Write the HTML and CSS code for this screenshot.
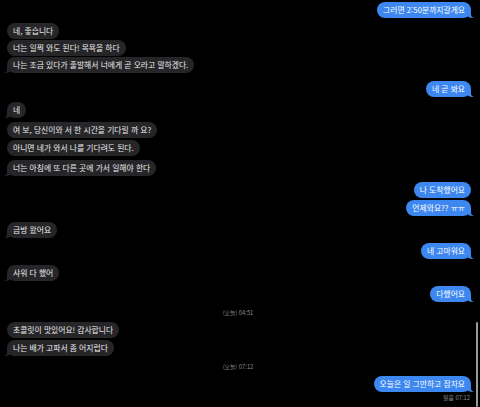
FILE: index.html
```html
<!DOCTYPE html>
<html lang="ko">
<head>
<meta charset="utf-8">
<title>메시지</title>
<link rel="stylesheet" href="styles.css">
</head>
<body>
<div class="screen">
  <div class="thread">
    <div class="msg out tail">그러면 2:50분까지갈게요</div>
    <div class="msg in m5">네, 좋습니다</div>
    <div class="msg in m1">너는 일찍 와도 된다! 목욕을 하다</div>
    <div class="msg in m1 tail">나는 조금 있다가 출발해서 너에게 곧 오라고 말하겠다.</div>
    <div class="msg out m8 tail">네 곧 봐요</div>
    <div class="msg in m5 tail">네</div>
    <div class="msg in m4">여 보, 당신이와 서 한 시간을 기다릴 까 요?</div>
    <div class="msg in m2">아니면 네가 와서 나를 기다려도 된다.</div>
    <div class="msg in m4 tail">너는 아침에 또 다른 곳에 가서 일해야 한다</div>
    <div class="msg out m6">나 도착했어요</div>
    <div class="msg out m2 tail">언제와요?? ㅠㅠ</div>
    <div class="msg in m6 tail">금방 왔어요</div>
    <div class="msg out m5 tail">네 고마워요</div>
    <div class="msg in m6 tail">샤워 다 했어</div>
    <div class="msg out m5 tail">다했어요</div>
    <div class="stamp">(오늘) 04:51</div>
    <div class="msg in m5">초콜릿이 맛있어요! 감사합니다</div>
    <div class="msg in m2 tail">나는 배가 고파서 좀 어지럽다</div>
    <div class="stamp">(오늘) 07:12</div>
    <div class="msg out m5 tail">오늘은 일 그만하고 잠자요</div>
    <div class="read">읽음 07:12</div>
  </div>
  <div class="scrollbar"></div>
</div>
</body>
</html>
```
FILE: styles.css
```css
html, body {
  margin: 0;
  padding: 0;
  background: #000;
}

.screen {
  position: relative;
  width: 480px;
  height: 407px;
  overflow: hidden;
  background: #000;
  font-family: "Noto Sans CJK KR", "Noto Sans", sans-serif;
}

.thread {
  display: flex;
  flex-direction: column;
  padding: 2px 9px 0 7px;
}

.msg {
  position: relative;
  z-index: 0;
  font-size: 7.8px;
  line-height: 10px;
  height: 10px;
  padding: 3px 6px;
  border-radius: 8px;
  white-space: nowrap;
}

.msg.in {
  align-self: flex-start;
  background: #262628;
  color: #ececec;
}

.msg.out {
  align-self: flex-end;
  background: #3d87f0;
  color: #fff;
}

.m1 { margin-top: 1px; }
.m2 { margin-top: 2px; }
.m4 { margin-top: 4px; }
.m5 { margin-top: 5px; }
.m6 { margin-top: 6px; }
.m8 { margin-top: 8px; }

/* bubble tails */
.msg.tail::before,
.msg.tail::after {
  content: "";
  position: absolute;
  bottom: 0;
  height: 8px;
  z-index: -1;
}

.msg.out.tail::before {
  right: -3px;
  width: 8px;
  background: #3d87f0;
  border-bottom-left-radius: 6px 5px;
}

.msg.out.tail::after {
  right: -9px;
  width: 9px;
  background: #000;
  border-bottom-left-radius: 4px;
}

.msg.in.tail::before {
  left: -3px;
  width: 8px;
  background: #262628;
  border-bottom-right-radius: 6px 5px;
}

.msg.in.tail::after {
  left: -9px;
  width: 9px;
  background: #000;
  border-bottom-right-radius: 4px;
}

.stamp {
  align-self: center;
  margin-top: 7px;
  font-size: 5.8px;
  line-height: 8px;
  height: 8px;
  color: #8c8c90;
  margin-left: -2px;
}

.read {
  align-self: flex-end;
  margin-top: 2px;
  margin-right: 1px;
  font-size: 5.8px;
  line-height: 8px;
  color: #8c8c90;
}

.scrollbar {
  position: absolute;
  right: 2px;
  top: 322px;
  width: 2px;
  height: 85px;
  border-radius: 1px;
  background: #9a9a9a;
}
```
